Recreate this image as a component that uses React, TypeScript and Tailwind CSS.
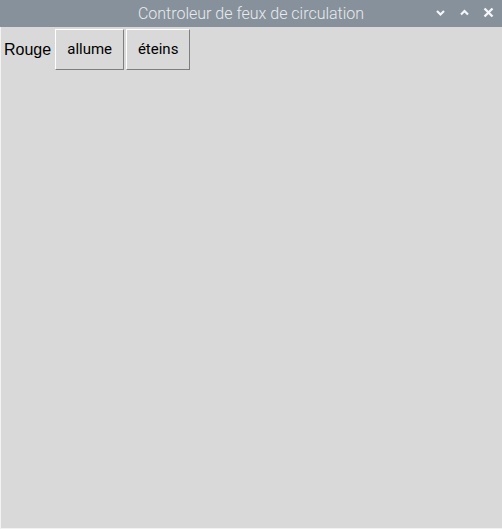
export default function App() {
  return (
    <div className="w-[502px] h-[529px] flex flex-col bg-[#d9d9d9] font-['Roboto',sans-serif] overflow-hidden">
      <div className="h-[27px] bg-[#87919b] flex items-center relative shrink-0">
        <div className="flex-1 text-center text-[16px] text-[#e8ebee] font-light">
          Controleur de feux de circulation
        </div>
        <div className="absolute right-[8px] top-[7px] flex gap-[13px] items-center">
          <svg width="11" height="11" viewBox="0 0 11 11">
            <path d="M2 4 L5.5 7.5 L9 4" stroke="#f4f6f8" strokeWidth="2.2" fill="none" />
          </svg>
          <svg width="11" height="11" viewBox="0 0 11 11">
            <path d="M2 7.5 L5.5 4 L9 7.5" stroke="#f4f6f8" strokeWidth="2.2" fill="none" />
          </svg>
          <svg width="11" height="11" viewBox="0 0 11 11">
            <path d="M1.5 1.5 L9.5 9.5 M9.5 1.5 L1.5 9.5" stroke="#f4f6f8" strokeWidth="2.4" fill="none" />
          </svg>
        </div>
      </div>
      <div className="flex-1 flex flex-col border-l border-l-[#f2f2f2] border-b border-b-[#f2f2f2]">
        <div className="flex items-start pt-[2px]">
          <div className="h-[41px] flex items-center pl-[3px] pr-[4px] text-[16px] text-black font-['Liberation_Sans',sans-serif]">
            Rouge
          </div>
          <button className="h-[41px] w-[69px] bg-[#d9d9d9] border border-t-[#ffffff] border-l-[#ffffff] border-r-[#7e7e7e] border-b-[#7e7e7e] text-[15px] text-black">
            allume
          </button>
          <button className="h-[41px] w-[64px] ml-[2px] bg-[#d9d9d9] border border-t-[#ffffff] border-l-[#ffffff] border-r-[#7e7e7e] border-b-[#7e7e7e] text-[15px] text-black">
            éteins
          </button>
        </div>
      </div>
    </div>
  );
}
